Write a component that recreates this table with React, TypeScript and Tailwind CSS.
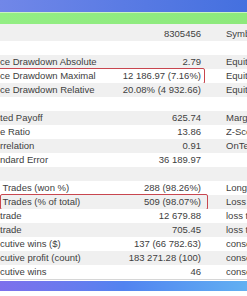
type Row = {
  label: string;
  value: string;
  side: string;
  boxed?: boolean;
  boxLeft?: string;
};

const rows: Row[] = [
  { label: '', value: '8305456', side: 'Symbol' },
  { label: '', value: '', side: '' },
  { label: 'ce Drawdown Absolute', value: '2.79', side: 'Equity Drawdown Absolute' },
  { label: 'ce Drawdown Maximal', value: '12 186.97 (7.16%)', side: 'Equity Drawdown Maximal', boxed: true, boxLeft: 'left-[-3px]' },
  { label: 'ce Drawdown Relative', value: '20.08% (4 932.66)', side: 'Equity Drawdown Relative' },
  { label: '', value: '', side: '' },
  { label: 'ted Payoff', value: '625.74', side: 'Margin Level' },
  { label: 'e Ratio', value: '13.86', side: 'Z-Score' },
  { label: 'rrelation', value: '0.91', side: 'OnTester result' },
  { label: 'ndard Error', value: '36 189.97', side: '' },
  { label: '', value: '', side: '' },
  { label: ' Trades (won %)', value: '288 (98.26%)', side: 'Long Trades (won %)' },
  { label: ' Trades (% of total)', value: '509 (98.07%)', side: 'Loss Trades (% of total)', boxed: true, boxLeft: 'left-0' },
  { label: 'trade', value: '12 679.88', side: 'loss trade' },
  { label: 'trade', value: '705.45', side: 'loss trade' },
  { label: 'cutive wins ($)', value: '137 (66 782.63)', side: 'consecutive losses ($)' },
  { label: 'cutive profit (count)', value: '183 271.28 (100)', side: 'consecutive loss (count)' },
  { label: 'cutive wins', value: '46', side: 'consecutive losses' },
];

const ReportRow = ({ row, index }: { row: Row; index: number }) => (
  <div className={`relative flex h-[14px] items-center leading-[14px] ${index % 2 === 0 ? 'bg-[#f0f0f0]' : 'bg-white'}`}>
    <div className="w-[120px] shrink-0 overflow-hidden whitespace-pre">{row.label}</div>
    <div className="w-[81px] shrink-0 text-right whitespace-nowrap">{row.value}</div>
    <div className="ml-[25px] flex-1 overflow-hidden whitespace-nowrap">{row.side}</div>
    {row.boxed && (
      <div className={`absolute top-[-1px] h-[16px] w-[208px] rounded-[2px] border-[1.5px] border-[#c8464f] ${row.boxLeft}`} />
    )}
  </div>
);

export default function App() {
  return (
    <div className="h-[296px] w-[247px] overflow-hidden bg-white font-['Liberation_Sans',Arial,sans-serif] text-[9.5px] text-[#404040]">
      <div className="h-[12px] bg-gradient-to-r from-[#7187e8] via-[#5a7be4] to-[#4470df]" />
      <div className="h-[12px] border-t border-[#c9f3bf] bg-gradient-to-r from-[#93ee84] to-[#8de97c]" />
      <div className="h-[3px] bg-[#f0f0f0]" />
      {rows.map((row, i) => (
        <ReportRow key={i} row={row} index={i} />
      ))}
      <div className="h-[1px] bg-[#d6d6d6]" />
      <div className="mt-[1px] h-[10px] bg-gradient-to-r from-[#7d6fec] via-[#5283f0] to-[#62b0f2]" />
    </div>
  );
}
